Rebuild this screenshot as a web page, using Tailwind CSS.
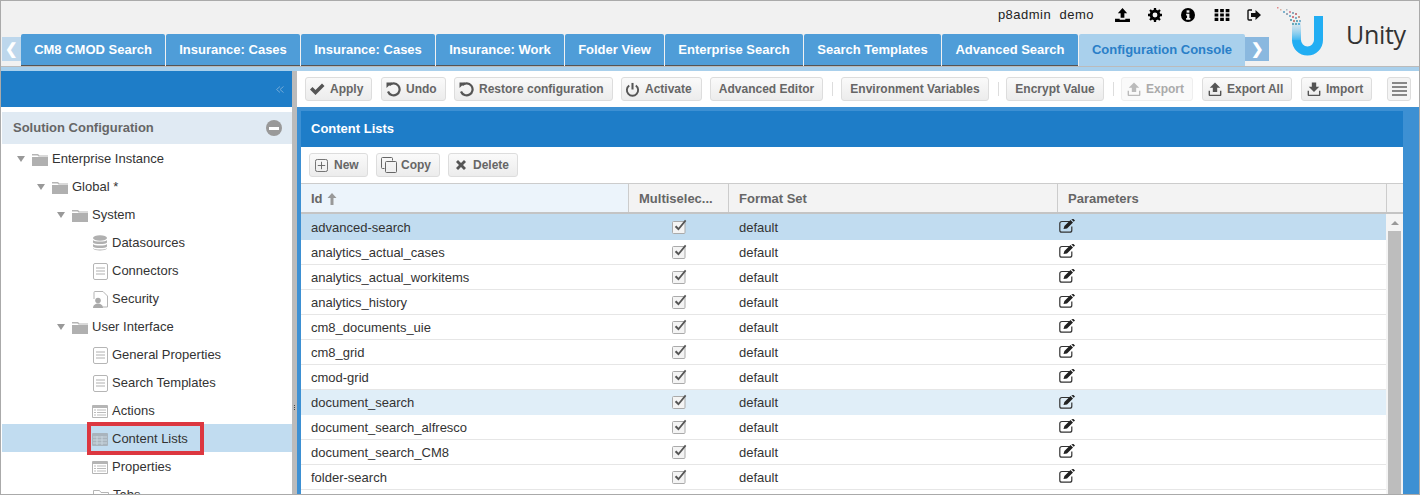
<!DOCTYPE html>
<html lang="en">
<head>
  <meta charset="UTF-8">
  <title>Unity - Configuration Console</title>
  <script src="https://cdn.jsdelivr.net/npm/@tailwindcss/browser@4"></script>
</head>
<body class="font-['Liberation_Sans',Arial,sans-serif]">
  <!-- Icon sprite -->
  <svg class="hidden">
    <symbol id="i-check" viewBox="0 0 16 16"><path d="M1 8.500l2.500-2.500 3 3L13 2.500 15.500 5l-9 9z" fill="currentColor"/></symbol>
    <symbol id="i-undo" viewBox="0 0 16 16"><path d="M4.200 4.200A6 6 0 1 1 3 10.500" fill="none" stroke="currentColor" stroke-width="2.200"/><path d="M1.500 1.500h5.500l-5.500 5.500z" fill="currentColor"/></symbol>
    <symbol id="i-power" viewBox="0 0 16 16"><path d="M4.500 3.800a6 6 0 1 0 7 0" fill="none" stroke="currentColor" stroke-width="2"/><path d="M8 1v7" stroke="currentColor" stroke-width="2.200"/></symbol>
    <symbol id="i-export" viewBox="0 0 16 16"><path d="M8 0.500l6 6h-3.500v5h-5v-5H2z" fill="currentColor"/><path d="M1.500 10v4.500a1 1 0 0 0 1 1h11a1 1 0 0 0 1-1V10" fill="none" stroke="currentColor" stroke-width="1.600"/></symbol>
    <symbol id="i-import" viewBox="0 0 16 16"><path d="M8 11.500l-6-6h3.500v-5h5v5H14z" fill="currentColor"/><path d="M1.500 10v4.500a1 1 0 0 0 1 1h11a1 1 0 0 0 1-1V10" fill="none" stroke="currentColor" stroke-width="1.600"/></symbol>
    <symbol id="i-new" viewBox="0 0 14 14"><rect x="0.500" y="0.500" width="13" height="13" rx="2" fill="none" stroke="currentColor"/><path d="M7 3v8M3 7h8" stroke="currentColor"/></symbol>
    <symbol id="i-copy" viewBox="0 0 16 16"><path d="M3.500 11.500h-2a1 1 0 0 1-1-1v-9a1 1 0 0 1 1-1h9a1 1 0 0 1 1 1v2" fill="none" stroke="currentColor"/><rect x="4.500" y="4.500" width="11" height="11" rx="1" fill="none" stroke="currentColor"/></symbol>
    <symbol id="i-x" viewBox="0 0 12 12"><path d="M3 1l3 3 3-3 2 2-3 3 3 3-2 2-3-3-3 3-2-2 3-3-3-3z" fill="currentColor"/></symbol>
    <symbol id="i-edit" viewBox="0 0 16 14"><path d="M10.500 2.500H2.800a2 2 0 0 0-2 2v6.700a2 2 0 0 0 2 2h8a2 2 0 0 0 2-2V7.500" fill="none" stroke="#333" stroke-width="1.200"/><path d="M4.500 10l.9-3L11.500 1l2.500 2.500-6 6.100zM12.300.3l2.400 2.400L16 1.500 14.500 0z" fill="#222"/></symbol>
    <symbol id="i-box" viewBox="0 0 15 15"><rect x="0.500" y="2.500" width="12.500" height="12" rx="1" fill="#f4f4f4" stroke="#aaa"/><path d="M2.800 8l1.500-1.500 2.200 2.200L13 0.800l1.300 1.200L6.500 11.500z" fill="#555"/></symbol>
    <symbol id="i-folder" viewBox="0 0 16 13"><path d="M0 1h6l1.500 1.500H16v1H6.500L5.500 2.500H0z" fill="#b5b5b5"/><path d="M0 4h16v9H0z" fill="#b0b0b0"/></symbol>
    <symbol id="i-doc" viewBox="0 0 15 17"><rect x="0.500" y="0.500" width="14" height="16" rx="1.500" fill="#fff" stroke="#b5b5b5"/><path d="M3 5h9M3 8h9M3 11h9" stroke="#b0b0b0"/></symbol>
    <symbol id="i-list" viewBox="0 0 16 13"><rect width="16" height="13" rx="1" fill="#b5b5b5"/><rect x="1" y="3" width="14" height="9" fill="#fff"/><path d="M5 5h9M5 7.500h9M5 10h9M2 5h2M2 7.500h2M2 10h2" stroke="#bbb"/></symbol>
  </svg>

  <div class="w-[1420px] h-[495px] overflow-hidden border border-[#aaaaaa] bg-white flex flex-col">

    <!-- Header -->
    <header class="h-[65px] shrink-0 bg-[#f1f1f1] flex">
      <div class="w-[1269px] flex flex-col">
        <div class="h-[33px] flex items-center justify-end text-[13px] text-[#222] pr-[9px] pb-[5px]">
          <span class="mr-[21px] tracking-[0.5px] font-medium">p8admin&nbsp; demo</span>
          <svg class="w-[15px] h-[14px] mr-[18px] text-black" viewBox="0 0 16 15"><path d="M8 0l5 5.500h-3v5H6v-5H3z" fill="currentColor"/><path d="M0 11.500h5v1h6v-1h5V15H0z" fill="currentColor"/></svg>
          <svg class="w-[14px] h-[14px] mr-[19px] text-black" viewBox="0 0 16 16"><circle cx="8" cy="8" r="4.500" fill="none" stroke="currentColor" stroke-width="3.400"/><path d="M8 0v3M8 13v3M0 8h3M13 8h3M2.300 2.300l2.200 2.200M11.500 11.500l2.200 2.200M2.300 13.700l2.200-2.200M11.500 4.500l2.200-2.200" stroke="currentColor" stroke-width="2.600"/></svg>
          <svg class="w-[14px] h-[14px] mr-[19px]" viewBox="0 0 15 15"><circle cx="7.500" cy="7.500" r="7.500" fill="#000"/><rect x="6" y="2.500" width="3" height="2.500" fill="#f1f1f1"/><path d="M5.500 6.200H9v4.600h1V12.500H5.500v-1.700h1V8h-1z" fill="#f1f1f1"/></svg>
          <svg class="w-[16px] h-[12px] mr-[17px]" viewBox="0 0 16 13" fill="#000"><path d="M0 0h4v3.500H0zM6 0h4v3.500H6zM12 0h4v3.500h-4zM0 4.750h4v3.500H0zM6 4.750h4v3.500H6zM12 4.750h4v3.500h-4zM0 9.500h4V13H0zM6 9.500h4V13H6zM12 9.500h4V13h-4z"/></svg>
          <svg class="w-[14px] h-[12px]" viewBox="0 0 14 12"><path d="M5 1H2a1 1 0 0 0-1 1v8a1 1 0 0 0 1 1h3" fill="none" stroke="#111" stroke-width="1.400"/><path d="M8.500 1l5.500 5-5.500 5V8H4V4h4.500z" fill="#111"/></svg>
        </div>
        <nav class="flex items-end h-[32px] pl-px text-[13px] font-bold text-white">
          <a class="w-[19px] h-[24px] mb-[5px] bg-[#bdd7ec] flex items-center justify-center text-white text-[15px]">❮</a>
          <a class="w-[144px] h-full bg-[#4f9dd8] rounded-t-[2px] border-b border-[#555] flex items-center justify-center">CM8 CMOD Search</a>
          <a class="w-[134px] ml-px h-full bg-[#4f9dd8] rounded-t-[2px] border-b border-[#555] flex items-center justify-center">Insurance: Cases</a>
          <a class="w-[134px] ml-px h-full bg-[#4f9dd8] rounded-t-[2px] border-b border-[#555] flex items-center justify-center">Insurance: Cases</a>
          <a class="w-[128px] ml-px h-full bg-[#4f9dd8] rounded-t-[2px] border-b border-[#555] flex items-center justify-center">Insurance: Work</a>
          <a class="w-[99px] ml-px h-full bg-[#4f9dd8] rounded-t-[2px] border-b border-[#555] flex items-center justify-center">Folder View</a>
          <a class="w-[138px] ml-px h-full bg-[#4f9dd8] rounded-t-[2px] border-b border-[#555] flex items-center justify-center">Enterprise Search</a>
          <a class="w-[137px] ml-px h-full bg-[#4f9dd8] rounded-t-[2px] border-b border-[#555] flex items-center justify-center">Search Templates</a>
          <a class="w-[136px] ml-px h-full bg-[#4f9dd8] rounded-t-[2px] border-b border-[#555] flex items-center justify-center">Advanced Search</a>
          <a class="w-[166px] ml-px h-full bg-[#a9d0ec] rounded-t-[2px] text-[#2a7fc8] flex items-center justify-center">Configuration Console</a>
          <a class="w-[24px] h-[24px] mb-[5px] bg-[#8ab8df] flex items-center justify-center text-white text-[15px]">❯</a>
        </nav>
      </div>
      <!-- Logo -->
      <div class="flex-1 flex items-start">
        <svg class="w-[62px] h-[60px] mt-[5px] shrink-0" viewBox="0 0 62 60">
          <defs><linearGradient id="u-fade" gradientUnits="userSpaceOnUse" x1="0" y1="16" x2="0" y2="36"><stop offset="0" stop-color="#9ccde6" stop-opacity=".2"/><stop offset="1" stop-color="#22aef3"/></linearGradient></defs>
          <path d="M26.500 34v0a11 11 0 0 0 22 0V10" fill="none" stroke="#22aef3" stroke-width="9"/>
          <path d="M26.500 16v18.500" fill="none" stroke="url(#u-fade)" stroke-width="9"/>
          <g fill="#7fb2cc">
            <rect x="7" y="1" width="1.500" height="1.500" fill="#e08a8a"/><rect x="10" y="3" width="1.500" height="1.500" fill="#d9b0a0"/><rect x="13" y="5" width="2" height="2"/><rect x="16" y="3" width="1.500" height="1.500" fill="#a9b8c0"/><rect x="16" y="7" width="2" height="2" fill="#9ab"/><rect x="19" y="5" width="2" height="2" fill="#d98f9f"/><rect x="19" y="9" width="2" height="2"/><rect x="22" y="6" width="2" height="2" fill="#8ab"/><rect x="25" y="7" width="2" height="2" fill="#c67f88"/><rect x="22" y="10" width="2" height="2" fill="#d07f88"/><rect x="25" y="11" width="2" height="2"/><rect x="28" y="10" width="2" height="2" fill="#c98"/><rect x="20" y="13" width="2" height="2" fill="#6ab"/><rect x="23" y="14" width="2" height="2" fill="#c58a80"/><rect x="26" y="14" width="2" height="2" fill="#6ab"/><rect x="29" y="14" width="2" height="2"/><rect x="22" y="17" width="2" height="2" fill="#6ab"/><rect x="25" y="17" width="2" height="2" fill="#6ab"/><rect x="28" y="17" width="2" height="2" fill="#5ab4e0"/>
          </g>
        </svg>
        <span class="ml-[14px] mt-[15px] text-[25px] leading-[36px] tracking-[-0.3px] text-[#333] font-['Open_Sans',sans-serif]">Unity</span>
      </div>
    </header>
    <div class="h-[5px] shrink-0 bg-[#a9d0ec] border-t border-[#bbb]"></div>

    <div class="flex-1 flex min-h-0">
      <!-- Left panel -->
      <aside class="w-[291px] shrink-0 flex flex-col overflow-hidden text-[13px] text-[#333]">
        <div class="h-[36px] shrink-0 bg-[#1e7dc8] flex items-center justify-end pr-[8px]">
          <svg class="w-[8px] h-[7px]" viewBox="0 0 8 7" fill="none" stroke="#6fa8d8"><path d="M4 .5l-3.500 3 3.500 3M7.500 .5L4 3.500l3.500 3"/></svg>
        </div>
        <div class="h-[32px] shrink-0 mt-[5px] ml-px bg-[#e0eaf3] flex items-center justify-between pl-[11px] pr-[10px] font-bold text-[#666]">
          <span>Solution Configuration</span>
          <span class="w-[16px] h-[16px] rounded-full bg-[#999] flex items-center justify-center"><span class="w-[10px] h-[3px] bg-white"></span></span>
        </div>
        <ul>
          <li class="h-[28px] pt-[2px] flex items-center pl-[16px]"><span class="w-0 h-0 border-x-[4px] border-x-transparent border-t-[6px] border-t-[#999]"></span><svg class="w-[16px] h-[13px] ml-[7px] mr-[4px]"><use href="#i-folder"/></svg>Enterprise Instance</li>
          <li class="h-[28px] pt-[2px] flex items-center pl-[36px]"><span class="w-0 h-0 border-x-[4px] border-x-transparent border-t-[6px] border-t-[#999]"></span><svg class="w-[16px] h-[13px] ml-[7px] mr-[4px]"><use href="#i-folder"/></svg>Global *</li>
          <li class="h-[28px] pt-[2px] flex items-center pl-[56px]"><span class="w-0 h-0 border-x-[4px] border-x-transparent border-t-[6px] border-t-[#999]"></span><svg class="w-[16px] h-[13px] ml-[7px] mr-[4px]"><use href="#i-folder"/></svg>System</li>
          <li class="h-[28px] pt-[2px] flex items-center pl-[91px]"><svg class="w-[16px] h-[16px] mr-[4px] text-[#b0b0b0]" viewBox="0 0 16 16" fill="currentColor"><ellipse cx="8" cy="3" rx="7" ry="2.800"/><path d="M1 5c1 2 13 2 14 0v2.500c-1 2-13 2-14 0zM1 9c1 2 13 2 14 0v2.500c-1 2-13 2-14 0zM1 13c1 2 13 2 14 0v.5c-1 2.500-13 2.500-14 0z"/></svg>Datasources</li>
          <li class="h-[28px] pt-[2px] flex items-center pl-[92px]"><svg class="w-[15px] h-[17px] mr-[4px]"><use href="#i-doc"/></svg>Connectors</li>
          <li class="h-[28px] pt-[2px] flex items-center pl-[92px]"><svg class="w-[15px] h-[17px] mr-[4px]" viewBox="0 0 15 17"><path d="M1 8V1.500a1 1 0 0 1 1-1h8l4.500 4.500v11h-5" fill="#fff" stroke="#b5b5b5"/><circle cx="5" cy="9.500" r="2.800" fill="#aaa"/><path d="M0 17c0-6 10-6 10 0z" fill="#aaa"/></svg>Security</li>
          <li class="h-[28px] pt-[2px] flex items-center pl-[56px]"><span class="w-0 h-0 border-x-[4px] border-x-transparent border-t-[6px] border-t-[#999]"></span><svg class="w-[16px] h-[13px] ml-[7px] mr-[4px]"><use href="#i-folder"/></svg>User Interface</li>
          <li class="h-[28px] pt-[2px] flex items-center pl-[92px]"><svg class="w-[15px] h-[17px] mr-[4px]"><use href="#i-doc"/></svg>General Properties</li>
          <li class="h-[28px] pt-[2px] flex items-center pl-[92px]"><svg class="w-[15px] h-[17px] mr-[4px]"><use href="#i-doc"/></svg>Search Templates</li>
          <li class="h-[28px] pt-[2px] flex items-center pl-[91px]"><svg class="w-[16px] h-[13px] mr-[4px]"><use href="#i-list"/></svg>Actions</li>
          <li class="relative h-[28px] pt-[2px] ml-px bg-[#c1dcf0] flex items-center pl-[90px]">
            <svg class="w-[16px] h-[13px] mr-[4px]" viewBox="0 0 16 13"><rect width="16" height="13" rx="1" fill="#a9b4bd"/><path d="M1 4h14M1 7h14M1 10h14M5 3v9M10 3v9" stroke="#c9d6df"/></svg>Content Lists
            <!-- red annotation box -->
            <span class="absolute left-[85px] top-[-2px] w-[117px] h-[33px] border-[4px] border-[#dc3740]"></span>
          </li>
          <li class="h-[28px] pt-[2px] flex items-center pl-[91px]"><svg class="w-[16px] h-[13px] mr-[4px]"><use href="#i-list"/></svg>Properties</li>
          <li class="h-[28px] pt-[2px] flex items-center pl-[92px]"><svg class="w-[16px] h-[13px] mr-[4px]" viewBox="0 0 16 13"><path d="M.5 12.500V1.500h6l1.500 2h7.500v9z" fill="#fff" stroke="#b5b5b5"/></svg>Tabs</li>
        </ul>
      </aside>

      <!-- Splitter -->
      <div class="w-[5px] shrink-0 bg-[#bbbbbb] flex flex-col items-center pt-[334px] gap-px">
        <span class="w-px h-px bg-[#444]"></span><span class="w-px h-px bg-[#444]"></span><span class="w-px h-px bg-[#444]"></span>
      </div>

      <!-- Right panel -->
      <main class="flex-1 min-w-0 flex flex-col">
        <div class="h-[36px] shrink-0 flex items-center bg-white text-[12px] font-bold text-[#666]">
          <button class="w-[67px] ml-[8px] h-[24px] flex items-center pl-[3px] gap-[5px] rounded-[3px] border border-[#ddd] bg-linear-to-b from-[#fafafa] to-[#ececec]"><svg class="w-[16px] h-[16px] text-[#555]"><use href="#i-check"/></svg>Apply</button>
          <button class="w-[65px] ml-[9px] h-[24px] flex items-center pl-[3px] gap-[5px] rounded-[3px] border border-[#ddd] bg-linear-to-b from-[#fafafa] to-[#ececec]"><svg class="w-[16px] h-[16px] text-[#555]"><use href="#i-undo"/></svg>Undo</button>
          <button class="w-[159px] ml-[8px] h-[24px] flex items-center pl-[3px] gap-[5px] rounded-[3px] border border-[#ddd] bg-linear-to-b from-[#fafafa] to-[#ececec]"><svg class="w-[16px] h-[16px] text-[#555]"><use href="#i-undo"/></svg>Restore configuration</button>
          <button class="w-[81px] ml-[8px] h-[24px] flex items-center pl-[3px] gap-[5px] rounded-[3px] border border-[#ddd] bg-linear-to-b from-[#fafafa] to-[#ececec]"><svg class="w-[15px] h-[15px] text-[#555]"><use href="#i-power"/></svg>Activate</button>
          <button class="w-[113px] ml-[8px] h-[24px] flex items-center justify-center rounded-[3px] border border-[#ddd] bg-linear-to-b from-[#fafafa] to-[#ececec]">Advanced Editor</button>
          <span class="w-px h-[14px] ml-[9px] bg-[#ddd]"></span>
          <button class="w-[148px] ml-[8px] h-[24px] flex items-center justify-center rounded-[3px] border border-[#ddd] bg-linear-to-b from-[#fafafa] to-[#ececec]">Environment Variables</button>
          <span class="w-px h-[14px] ml-[9px] bg-[#ddd]"></span>
          <button class="w-[98px] ml-[7px] h-[24px] flex items-center justify-center rounded-[3px] border border-[#ddd] bg-linear-to-b from-[#fafafa] to-[#ececec]">Encrypt Value</button>
          <span class="w-px h-[14px] ml-[9px] bg-[#ddd]"></span>
          <button class="w-[72px] ml-[7px] h-[24px] flex items-center pl-[5px] gap-[5px] rounded-[3px] border border-[#eee] bg-[#fafafa] text-[#aaa]"><svg class="w-[14px] h-[14px] text-[#bbb]"><use href="#i-export"/></svg>Export</button>
          <button class="w-[90px] ml-[9px] h-[24px] flex items-center pl-[5px] gap-[5px] rounded-[3px] border border-[#ddd] bg-linear-to-b from-[#fafafa] to-[#ececec]"><svg class="w-[14px] h-[14px] text-[#555]"><use href="#i-export"/></svg>Export All</button>
          <button class="w-[71px] ml-[9px] h-[24px] flex items-center pl-[5px] gap-[5px] rounded-[3px] border border-[#ddd] bg-linear-to-b from-[#fafafa] to-[#ececec]"><svg class="w-[14px] h-[14px] text-[#555]"><use href="#i-import"/></svg>Import</button>
          <button class="w-[24px] ml-[15px] h-[24px] flex flex-col items-center justify-center gap-[2px] rounded-[3px] border border-[#ddd] bg-[#f4f4f4]">
            <span class="w-[15px] h-[2px] bg-[#888]"></span><span class="w-[15px] h-[2px] bg-[#888]"></span><span class="w-[15px] h-[2px] bg-[#888]"></span><span class="w-[15px] h-[2px] bg-[#888]"></span>
          </button>
        </div>

        <section class="flex-1 min-h-0 bg-[#3d90d3] pt-[4px] pl-[4px] pr-[16px] flex flex-col">
          <h2 class="h-[36px] shrink-0 bg-[#1e7dc8] flex items-center pl-[10px] text-[13px] font-bold text-white">Content Lists</h2>
          <div class="flex-1 min-h-0 bg-white flex flex-col">
            <div class="h-[36px] shrink-0 flex items-center gap-[8px] pl-[8px] text-[12px] font-bold text-[#666]">
              <button class="w-[59px] h-[24px] flex items-center pl-[5px] gap-[6px] rounded-[3px] border border-[#ddd] bg-linear-to-b from-[#fafafa] to-[#ececec]"><svg class="w-[13px] h-[13px] text-[#666]"><use href="#i-new"/></svg>New</button>
              <button class="w-[64px] h-[24px] flex items-center pl-[4px] gap-[4px] rounded-[3px] border border-[#ddd] bg-linear-to-b from-[#fafafa] to-[#ececec]"><svg class="w-[16px] h-[16px] text-[#666]"><use href="#i-copy"/></svg>Copy</button>
              <button class="w-[70px] h-[24px] flex items-center pl-[6px] gap-[6px] rounded-[3px] border border-[#ddd] bg-linear-to-b from-[#fafafa] to-[#ececec]"><svg class="w-[12px] h-[12px] text-[#555]"><use href="#i-x"/></svg>Delete</button>
            </div>

            <!-- Table header -->
            <div class="h-[31px] shrink-0 grid grid-cols-[327px_100px_329px_329px_17px] border-t border-[#ccc] border-b-2 border-b-[#c4c4c4] text-[13px] font-bold text-[#666]">
              <div class="bg-[#ecf4fb] flex items-center pl-[10px] pt-[2px]">Id<svg class="w-[10px] h-[12px] ml-[4px]" viewBox="0 0 10 12"><path d="M5 0l4.500 5H6.500v7h-3V5H.5z" fill="#999"/></svg></div>
              <div class="bg-[#f3f3f3] border-l border-[#ccc] flex items-center pl-[10px] pt-[2px] whitespace-nowrap">Multiselec...</div>
              <div class="bg-[#f3f3f3] border-l border-[#ccc] flex items-center pl-[10px] pt-[2px]">Format Set</div>
              <div class="bg-[#f3f3f3] border-l border-[#ccc] flex items-center pl-[10px] pt-[2px]">Parameters</div>
              <div class="bg-[#f3f3f3] border-l border-[#ccc]"></div>
            </div>

            <!-- Table body -->
            <div class="flex-1 min-h-0 flex text-[13px] text-[#333] overflow-hidden">
              <div class="w-[1085px] shrink-0">
                <div class="h-[26px] bg-[#c1dcf0] grid grid-cols-[327px_100px_329px_329px] items-center"><span class="pl-[10px] pt-[2px]">advanced-search</span><svg class="w-[15px] h-[15px] justify-self-center ml-[2px] mb-[2px]"><use href="#i-box"/></svg><span class="pl-[11px] pt-[2px]">default</span><svg class="w-[16px] h-[14px] ml-[2px] mb-[2px]"><use href="#i-edit"/></svg></div>
                <div class="h-[25px] border-b border-[#e6e6e6] grid grid-cols-[327px_100px_329px_329px] items-center"><span class="pl-[10px] pt-[2px]">analytics_actual_cases</span><svg class="w-[15px] h-[15px] justify-self-center ml-[2px] mb-[2px]"><use href="#i-box"/></svg><span class="pl-[11px] pt-[2px]">default</span><svg class="w-[16px] h-[14px] ml-[2px] mb-[2px]"><use href="#i-edit"/></svg></div>
                <div class="h-[25px] border-b border-[#e6e6e6] grid grid-cols-[327px_100px_329px_329px] items-center"><span class="pl-[10px] pt-[2px]">analytics_actual_workitems</span><svg class="w-[15px] h-[15px] justify-self-center ml-[2px] mb-[2px]"><use href="#i-box"/></svg><span class="pl-[11px] pt-[2px]">default</span><svg class="w-[16px] h-[14px] ml-[2px] mb-[2px]"><use href="#i-edit"/></svg></div>
                <div class="h-[25px] border-b border-[#e6e6e6] grid grid-cols-[327px_100px_329px_329px] items-center"><span class="pl-[10px] pt-[2px]">analytics_history</span><svg class="w-[15px] h-[15px] justify-self-center ml-[2px] mb-[2px]"><use href="#i-box"/></svg><span class="pl-[11px] pt-[2px]">default</span><svg class="w-[16px] h-[14px] ml-[2px] mb-[2px]"><use href="#i-edit"/></svg></div>
                <div class="h-[25px] border-b border-[#e6e6e6] grid grid-cols-[327px_100px_329px_329px] items-center"><span class="pl-[10px] pt-[2px]">cm8_documents_uie</span><svg class="w-[15px] h-[15px] justify-self-center ml-[2px] mb-[2px]"><use href="#i-box"/></svg><span class="pl-[11px] pt-[2px]">default</span><svg class="w-[16px] h-[14px] ml-[2px] mb-[2px]"><use href="#i-edit"/></svg></div>
                <div class="h-[25px] border-b border-[#e6e6e6] grid grid-cols-[327px_100px_329px_329px] items-center"><span class="pl-[10px] pt-[2px]">cm8_grid</span><svg class="w-[15px] h-[15px] justify-self-center ml-[2px] mb-[2px]"><use href="#i-box"/></svg><span class="pl-[11px] pt-[2px]">default</span><svg class="w-[16px] h-[14px] ml-[2px] mb-[2px]"><use href="#i-edit"/></svg></div>
                <div class="h-[25px] border-b border-[#e6e6e6] grid grid-cols-[327px_100px_329px_329px] items-center"><span class="pl-[10px] pt-[2px]">cmod-grid</span><svg class="w-[15px] h-[15px] justify-self-center ml-[2px] mb-[2px]"><use href="#i-box"/></svg><span class="pl-[11px] pt-[2px]">default</span><svg class="w-[16px] h-[14px] ml-[2px] mb-[2px]"><use href="#i-edit"/></svg></div>
                <div class="h-[25px] bg-[#e0eef8] grid grid-cols-[327px_100px_329px_329px] items-center"><span class="pl-[10px]">document_search</span><svg class="w-[15px] h-[15px] justify-self-center ml-[2px] mb-[2px]"><use href="#i-box"/></svg><span class="pl-[11px]">default</span><svg class="w-[16px] h-[14px] ml-[2px] mb-[2px]"><use href="#i-edit"/></svg></div>
                <div class="h-[25px] border-b border-[#e6e6e6] grid grid-cols-[327px_100px_329px_329px] items-center"><span class="pl-[10px] pt-[2px]">document_search_alfresco</span><svg class="w-[15px] h-[15px] justify-self-center ml-[2px] mb-[2px]"><use href="#i-box"/></svg><span class="pl-[11px] pt-[2px]">default</span><svg class="w-[16px] h-[14px] ml-[2px] mb-[2px]"><use href="#i-edit"/></svg></div>
                <div class="h-[25px] border-b border-[#e6e6e6] grid grid-cols-[327px_100px_329px_329px] items-center"><span class="pl-[10px] pt-[2px]">document_search_CM8</span><svg class="w-[15px] h-[15px] justify-self-center ml-[2px] mb-[2px]"><use href="#i-box"/></svg><span class="pl-[11px] pt-[2px]">default</span><svg class="w-[16px] h-[14px] ml-[2px] mb-[2px]"><use href="#i-edit"/></svg></div>
                <div class="h-[25px] border-b border-[#e6e6e6] grid grid-cols-[327px_100px_329px_329px] items-center"><span class="pl-[10px] pt-[2px]">folder-search</span><svg class="w-[15px] h-[15px] justify-self-center ml-[2px] mb-[2px]"><use href="#i-box"/></svg><span class="pl-[11px] pt-[2px]">default</span><svg class="w-[16px] h-[14px] ml-[2px] mb-[2px]"><use href="#i-edit"/></svg></div>
              </div>
              <!-- Scrollbar -->
              <div class="flex-1 bg-[#f4f4f4] flex flex-col items-center">
                <span class="mt-[7px] w-0 h-0 border-x-[4px] border-x-transparent border-b-[4px] border-b-[#999]"></span>
                <span class="mt-[6px] w-[13px] flex-1 bg-[#bdbdbd]"></span>
              </div>
            </div>
          </div>
        </section>
      </main>
    </div>
  </div>
</body>
</html>
